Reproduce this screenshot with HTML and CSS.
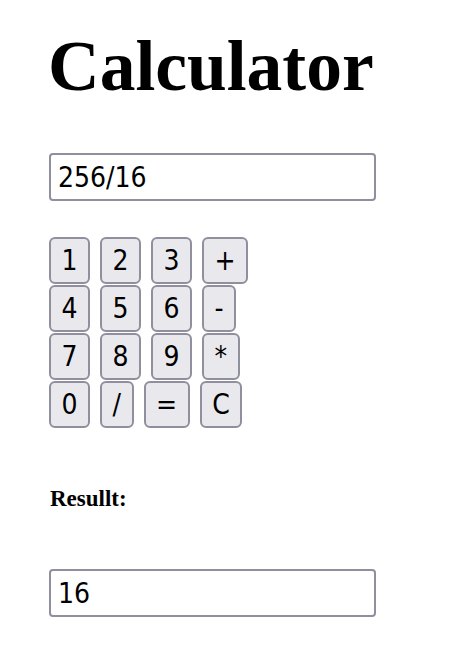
FILE: index.html
```html
<!DOCTYPE html>
<html>
<head>
<meta charset="utf-8">
<title>Calculator</title>
<link rel="stylesheet" href="styles.css">
</head>
<body>
<div class="calc">
  <h1 class="title">Calculator</h1>
  <input class="field" type="text" value="256/16">
  <div class="keypad">
    <div class="row"><button class="key">1</button><button class="key">2</button><button class="key">3</button><button class="key">+</button></div>
    <div class="row"><button class="key">4</button><button class="key">5</button><button class="key">6</button><button class="key">-</button></div>
    <div class="row"><button class="key">7</button><button class="key">8</button><button class="key">9</button><button class="key">*</button></div>
    <div class="row"><button class="key">0</button><button class="key">/</button><button class="key">=</button><button class="key">C</button></div>
  </div>
  <p class="label">Resullt:</p>
  <input class="field" type="text" value="16">
</div>
</body>
</html>
```
FILE: styles.css
```css
body {
  margin: 0;
  font-family: "Liberation Serif", "Times New Roman", serif;
  background: #fff;
  color: #000;
}
.calc {
  padding: 24px 48px;
  display: flex;
  flex-direction: column;
  align-items: flex-start;
}
.title {
  font-size: 71.5px;
  line-height: 84px;
  margin: 0;
  font-weight: bold;
}
.field {
  margin: 45px 0 0 1px;
  width: 327px;
  height: 48px;
  box-sizing: border-box;
  border: 2px solid #8f8f9d;
  border-radius: 4px;
  padding: 0 7px;
  font-family: "DejaVu Sans Condensed", "DejaVu Sans", sans-serif;
  font-stretch: condensed;
  font-size: 28px;
  color: #000;
  background: #fff;
  outline: none;
}
.keypad {
  margin: 36px 0 0 1px;
  display: flex;
  flex-direction: column;
  gap: 1px;
}
.row {
  display: flex;
  gap: 10px;
}
.key {
  height: 47px;
  padding: 0 10.5px;
  border: 2px solid #8f8f9d;
  border-radius: 6px;
  background: #e9e9ed;
  font-family: "DejaVu Sans Condensed", "DejaVu Sans", sans-serif;
  font-stretch: condensed;
  font-size: 28px;
  color: #000;
  margin: 0;
}
.label {
  margin: 59px 0 0 2px;
  font-size: 23px;
  line-height: 24px;
  font-weight: bold;
}
.label + .field {
  margin-top: 58px;
}
```
